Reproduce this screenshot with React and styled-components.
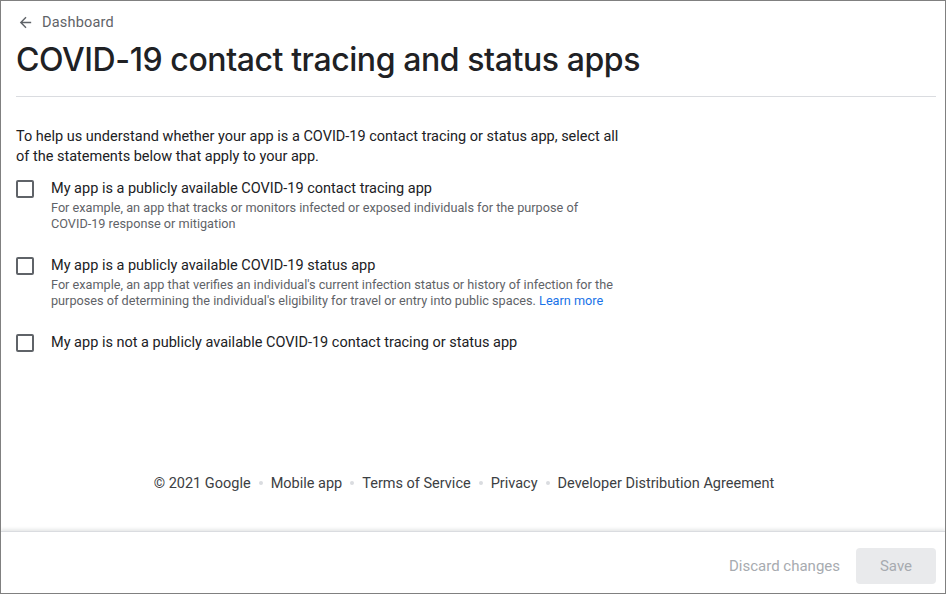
import React from "react"
import styled, { createGlobalStyle } from "styled-components"

const GlobalStyle = createGlobalStyle`
  html, body {
    margin: 0;
    padding: 0;
    background: #fff;
  }
  * {
    box-sizing: border-box;
  }
`

const options = [
  {
    label: "My app is a publicly available COVID-19 contact tracing app",
    help: [
      "For example, an app that tracks or monitors infected or exposed individuals for the purpose of",
      "COVID-19 response or mitigation",
    ],
  },
  {
    label: "My app is a publicly available COVID-19 status app",
    help: [
      "For example, an app that verifies an individual's current infection status or history of infection for the",
      "purposes of determining the individual's eligibility for travel or entry into public spaces.",
    ],
    link: "Learn more",
  },
  {
    label: "My app is not a publicly available COVID-19 contact tracing or status app",
  },
]

const footerLinks = ["© 2021 Google", "Mobile app", "Terms of Service", "Privacy", "Developer Distribution Agreement"]

const App = () => {
  return (
    <>
      <GlobalStyle />
      <Page>
        <Content>
          <BackLink>
            <svg width="17" height="17" viewBox="0 0 24 24">
              <path d="M20 11H7.83l5.59-5.59L12 4l-8 8 8 8 1.41-1.41L7.83 13H20v-2z" fill="#5f6368" />
            </svg>
            <span>Dashboard</span>
          </BackLink>
          <Title>COVID-19 contact tracing and status apps</Title>
          <Divider />
          <Intro>
            To help us understand whether your app is a COVID-19 contact tracing or status app, select all
            <br />
            of the statements below that apply to your app.
          </Intro>
          <OptionList>
            {options.map((o) => (
              <Option key={o.label}>
                <Box />
                <OptionText>
                  <Label>{o.label}</Label>
                  {o.help && (
                    <Help>
                      {o.help[0]}
                      <br />
                      {o.help[1]}
                      {o.link && (
                        <>
                          {" "}
                          <a href="#">{o.link}</a>
                        </>
                      )}
                    </Help>
                  )}
                </OptionText>
              </Option>
            ))}
          </OptionList>
        </Content>
        <Footer>
          {footerLinks.map((l, i) => (
            <React.Fragment key={l}>
              {i > 0 && <Dot />}
              <FooterLink>{l}</FooterLink>
            </React.Fragment>
          ))}
        </Footer>
        <ActionBar>
          <DiscardButton>Discard changes</DiscardButton>
          <SaveButton>Save</SaveButton>
        </ActionBar>
      </Page>
    </>
  )
}

const Page = styled.div`
  width: 946px;
  height: 594px;
  border: 1px solid #808080;
  display: flex;
  flex-direction: column;
  font-family: Roboto, "Liberation Sans", sans-serif;
  color: #202124;
  overflow: hidden;
`

const Content = styled.main`
  flex: 1;
  padding: 0 9px 0 15px;
`

const BackLink = styled.div`
  display: flex;
  align-items: center;
  gap: 8px;
  height: 42px;
  padding-left: 1px;
  font-size: 14.5px;
  color: #5f6368;
  letter-spacing: 0.2px;
`

const Title = styled.h1`
  margin: -2px 0 0;
  font-family: Inter, "Open Sans", sans-serif;
  font-weight: 500;
  font-size: 32px;
  letter-spacing: -0.42px;
  line-height: 38px;
  color: #202124;
`

const Divider = styled.hr`
  margin: 17px 0 0;
  border: 0;
  border-top: 1px solid #dadce0;
`

const Intro = styled.p`
  margin: 30px 0 0;
  font-size: 14.5px;
  line-height: 20px;
  color: #202124;
`

const OptionList = styled.div`
  display: flex;
  flex-direction: column;
  gap: 25px;
  margin-top: 13px;
`

const Option = styled.label`
  display: flex;
  align-items: flex-start;
  gap: 17px;
`

const Box = styled.span`
  flex: none;
  width: 18px;
  height: 18px;
  border: 2px solid #5f6368;
  border-radius: 2px;
`

const OptionText = styled.div`
  display: flex;
  flex-direction: column;
  gap: 2px;
`

const Label = styled.span`
  font-size: 14.5px;
  line-height: 18px;
  color: #202124;
`

const Help = styled.span`
  font-size: 12.7px;
  line-height: 16px;
  color: #5f6368;

  a {
    color: #1a73e8;
    text-decoration: none;
  }
`

const Footer = styled.footer`
  display: flex;
  justify-content: center;
  align-items: center;
  gap: 8px;
  height: 52px;
  margin-bottom: 22px;
  padding-right: 18px;
  font-size: 14.5px;
  color: #3c4043;
`

const FooterLink = styled.span``

const Dot = styled.span`
  width: 4px;
  height: 4px;
  border-radius: 50%;
  background: #dadce0;
`

const ActionBar = styled.div`
  display: flex;
  justify-content: flex-end;
  align-items: center;
  gap: 16px;
  height: 62px;
  padding: 7px 9px 0 0;
  border-top: 1px solid #dadce0;
  box-shadow: 0 -2px 3px rgba(60, 64, 67, 0.12);
`

const DiscardButton = styled.button`
  border: 0;
  background: none;
  font-family: Roboto, "Liberation Sans", sans-serif;
  font-size: 15px;
  color: #a7abb0;
  padding: 0;
`

const SaveButton = styled.button`
  width: 80px;
  height: 36px;
  border: 0;
  border-radius: 4px;
  background: #e9eaec;
  font-family: Roboto, "Liberation Sans", sans-serif;
  font-size: 15px;
  color: #a7abb0;
`

export default App
